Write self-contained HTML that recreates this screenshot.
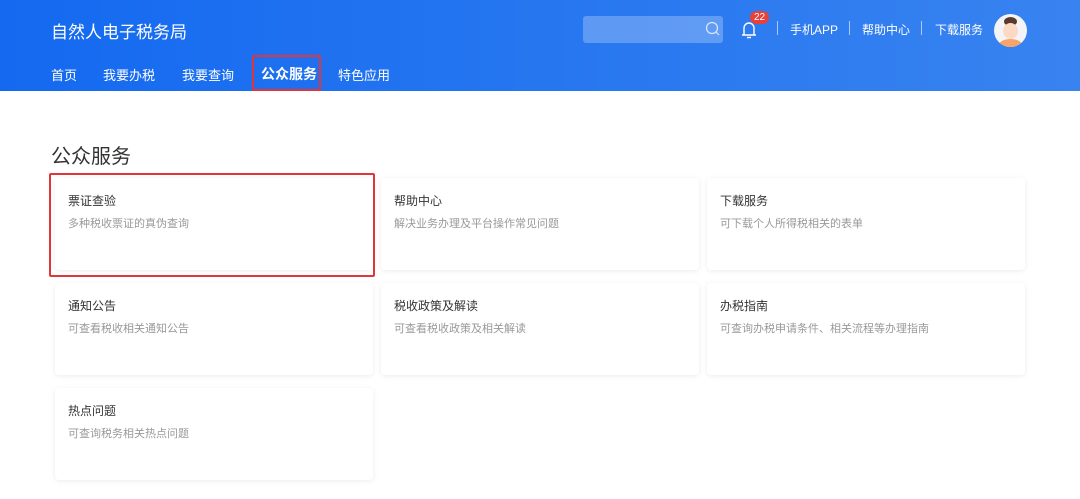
<!DOCTYPE html>
<html><head><meta charset="utf-8"><style>
*{margin:0;padding:0;box-sizing:border-box}
body{width:1080px;height:499px;overflow:hidden;background:#fff;font-family:"Liberation Sans","Noto Sans CJK SC",sans-serif;position:relative}
.hdr{position:absolute;left:0;top:0;width:1080px;height:91px;background:linear-gradient(90deg,#1469f0,#3883f0)}
.t{position:absolute;color:#fff;white-space:nowrap}
.card{position:absolute;width:318px;height:92px;background:#fff;border-radius:4px;box-shadow:0 1px 6px rgba(0,0,0,.08)}
.card b{position:absolute;left:13px;top:14px;font-size:12px;font-weight:normal;color:#333}
.card span{position:absolute;left:13px;top:37px;font-size:11px;color:#999}
.red{position:absolute;border:2px solid #e0353a;border-radius:2px}
</style></head><body>
<div class="hdr"></div>
<div class="t" style="left:51px;top:18px;font-size:17px">自然人电子税务局</div>
<div class="t" style="left:51px;top:65px;font-size:13px">首页</div>
<div class="t" style="left:103px;top:65px;font-size:13px">我要办税</div>
<div class="t" style="left:182px;top:65px;font-size:13px">我要查询</div>
<div class="t" style="left:261px;top:64px;font-size:14px;font-weight:bold">公众服务</div>
<div class="t" style="left:338px;top:65px;font-size:13px">特色应用</div>
<div class="red" style="left:252px;top:55px;width:69px;height:36px"></div>
<div style="position:absolute;left:583px;top:16px;width:140px;height:27px;background:rgba(255,255,255,.25);border-radius:3px"></div>
<svg style="position:absolute;left:705px;top:21px" width="16" height="16"><circle cx="7" cy="7" r="5.5" fill="none" stroke="#dbe6fb" stroke-width="1.2"/><path d="M11 11l3 3" stroke="#dbe6fb" stroke-width="1.2"/></svg>
<svg style="position:absolute;left:739px;top:18px" width="20" height="22"><path d="M3 17h14M5 17V10a5 5 0 0 1 10 0v7M8 19.5h4" fill="none" stroke="#fff" stroke-width="1.4"/></svg>
<div style="position:absolute;left:750px;top:11px;width:19px;height:13px;background:#e8403a;border-radius:7px;color:#fff;font-size:10px;text-align:center;line-height:13px">22</div>
<div style="position:absolute;left:777px;top:21px;width:1px;height:14px;background:rgba(255,255,255,.6)"></div>
<div class="t" style="left:790px;top:21px;font-size:12px">手机APP</div>
<div style="position:absolute;left:849px;top:21px;width:1px;height:14px;background:rgba(255,255,255,.6)"></div>
<div class="t" style="left:862px;top:21px;font-size:12px">帮助中心</div>
<div style="position:absolute;left:921px;top:21px;width:1px;height:14px;background:rgba(255,255,255,.6)"></div>
<div class="t" style="left:935px;top:21px;font-size:12px">下载服务</div>
<div style="position:absolute;left:994px;top:14px;width:33px;height:33px;border-radius:50%;background:#f4f4f6;overflow:hidden">
<div style="position:absolute;left:10px;top:3px;width:13px;height:9px;border-radius:50%;background:#5a3a2a"></div>
<div style="position:absolute;left:9px;top:9px;width:15px;height:16px;border-radius:50%;background:#fbd9c5"></div>
<div style="position:absolute;left:5px;top:25px;width:23px;height:12px;border-radius:50%;background:#f6a46a"></div></div>
<div style="position:absolute;left:51px;top:140px;font-size:20px;color:#333">公众服务</div>
<div class="card" style="left:55px;top:178px"><b>票证查验</b><span>多种税收票证的真伪查询</span></div>
<div class="card" style="left:381px;top:178px"><b>帮助中心</b><span>解决业务办理及平台操作常见问题</span></div>
<div class="card" style="left:707px;top:178px"><b>下载服务</b><span>可下载个人所得税相关的表单</span></div>
<div class="card" style="left:55px;top:283px"><b>通知公告</b><span>可查看税收相关通知公告</span></div>
<div class="card" style="left:381px;top:283px"><b>税收政策及解读</b><span>可查看税收政策及相关解读</span></div>
<div class="card" style="left:707px;top:283px"><b>办税指南</b><span>可查询办税申请条件、相关流程等办理指南</span></div>
<div class="card" style="left:55px;top:388px"><b>热点问题</b><span>可查询税务相关热点问题</span></div>
<div class="red" style="left:49px;top:173px;width:326px;height:104px"></div>
</body></html>
